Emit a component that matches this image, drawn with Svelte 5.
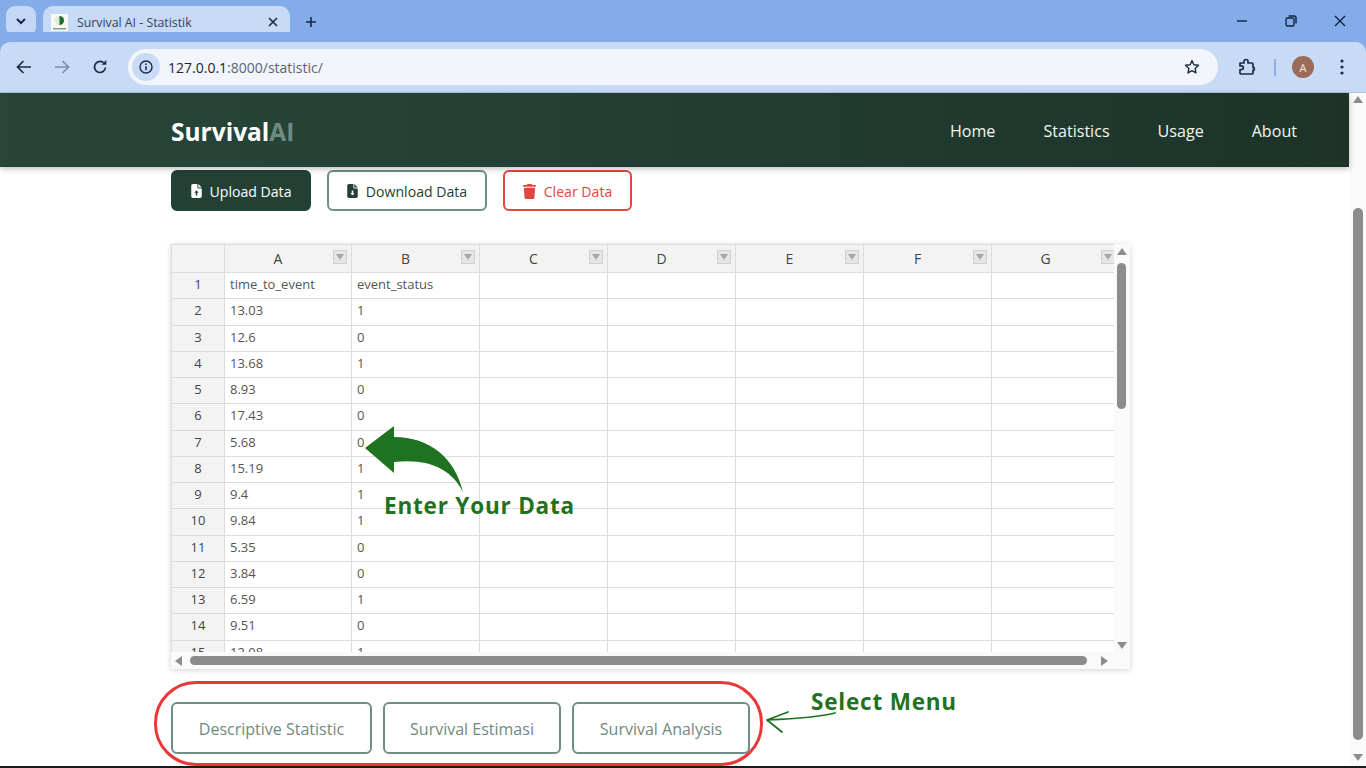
<script>
	const columns = ["A", "B", "C", "D", "E", "F", "G"];
	const data = [
		["time_to_event", "event_status"],
		["13.03", "1"],
		["12.6", "0"],
		["13.68", "1"],
		["8.93", "0"],
		["17.43", "0"],
		["5.68", "0"],
		["15.19", "1"],
		["9.4", "1"],
		["9.84", "1"],
		["5.35", "0"],
		["3.84", "0"],
		["6.59", "1"],
		["9.51", "0"],
		["12.08", "1"],
		["", ""]
	];
	const file = "M64 0C28.7 0 0 28.7 0 64V448c0 35.3 28.7 64 64 64H320c35.3 0 64-28.7 64-64V160H256c-17.7 0-32-14.3-32-32V0H64zM256 0V128H384L256 0z";
	const trash = "M135.2 17.7L128 32H32C14.3 32 0 46.3 0 64S14.3 96 32 96H416c17.7 0 32-14.3 32-32s-14.3-32-32-32H320l-7.2-14.3C307.4 6.8 296.3 0 284.2 0H163.8c-12.1 0-23.2 6.8-28.6 17.7zM416 128H32L53.2 467c1.6 25.3 22.6 45 47.9 45H346.9c25.3 0 46.3-19.7 47.9-45L416 128z";
</script>

<div class="window">
	<div class="tabstrip">
		<button class="tab-search" aria-label="Search tabs">
			<svg width="12" height="8" viewBox="0 0 12 8"><path d="M2 2l4 4 4-4" fill="none" stroke="#1c2b41" stroke-width="2"/></svg>
		</button>
		<div class="tab">
			<svg class="favicon" width="17" height="17" viewBox="0 0 17 17">
				<rect width="17" height="17" fill="#f6f8f2"/>
				<circle cx="8.5" cy="6.5" r="4.5" fill="#dfeadb"/>
				<path d="M8.5 2a4.5 4.5 0 0 1 0 9z" fill="#1f6b2c"/>
				<rect x="2" y="14" width="13" height="1.5" fill="#7da584"/>
			</svg>
			<span class="tab-title">Survival AI - Statistik</span>
			<svg class="tab-close" width="10" height="10" viewBox="0 0 10 10"><path d="M1 1l8 8M9 1l-8 8" stroke="#1c2b41" stroke-width="1.6"/></svg>
		</div>
		<svg class="new-tab" width="12" height="12" viewBox="0 0 12 12"><path d="M6 1v10M1 6h10" stroke="#1c2b41" stroke-width="1.6"/></svg>
		<div class="win-controls">
			<svg width="12" height="12" viewBox="0 0 12 12"><path d="M1 6h10" stroke="#10233f" stroke-width="1.4"/></svg>
			<svg width="12" height="12" viewBox="0 0 12 12"><rect x="1" y="3" width="8" height="8" rx="1.5" fill="none" stroke="#10233f" stroke-width="1.4"/><path d="M3.5 1h5.5a2 2 0 0 1 2 2v5.5" fill="none" stroke="#10233f" stroke-width="1.4"/></svg>
			<svg width="12" height="12" viewBox="0 0 12 12"><path d="M1 1l10 10M11 1L1 11" stroke="#10233f" stroke-width="1.4"/></svg>
		</div>
	</div>

	<div class="toolbar">
		<svg class="nav-icon" width="16" height="14" viewBox="0 0 16 14"><path d="M15 7H2M7.5 1L1.5 7l6 6" fill="none" stroke="#1c2b41" stroke-width="1.7"/></svg>
		<svg class="nav-icon" width="16" height="14" viewBox="0 0 16 14"><path d="M1 7h13M8.5 1l6 6-6 6" fill="none" stroke="#7d8da5" stroke-width="1.6"/></svg>
		<svg class="nav-icon" width="16" height="16" viewBox="0 0 16 16"><path d="M13.5 8.5A5.5 5.5 0 1 1 11.5 3.7" fill="none" stroke="#1c2b41" stroke-width="1.7"/><path d="M9.5 5.8h4.8V1z" fill="#1c2b41"/></svg>
		<div class="omnibox">
			<span class="site-info">
				<svg width="14" height="14" viewBox="0 0 14 14"><circle cx="7" cy="7" r="6" fill="none" stroke="#1c2b41" stroke-width="1.4"/><path d="M7 6.2v4M7 3.6v1.5" stroke="#1c2b41" stroke-width="1.5"/></svg>
			</span>
			<span class="url"><b>127.0.0.1</b>:8000/statistic/</span>
			<svg class="star" width="16" height="16" viewBox="0 0 16 16"><path d="M8 1.6l1.9 4.2 4.6.5-3.4 3.1.9 4.5L8 11.6l-4 2.3.9-4.5L1.500 6.300l4.600-.5z" fill="none" stroke="#1c2b41" stroke-width="1.4" stroke-linejoin="round"/></svg>
		</div>
		<svg class="puzzle" width="18" height="18" viewBox="0 0 18 18"><path d="M2 5h4V3.500a2 2 0 0 1 4 0V5h4a1 1 0 0 1 1 1v3.500h1.200v2.500H15V15a1 1 0 0 1-1 1H3a1 1 0 0 1-1-1v-3.500h1.500a1.800 1.800 0 0 0 0-3.600H2z" fill="none" stroke="#1c2b41" stroke-width="1.7" stroke-linejoin="round"/></svg>
		<span class="divider"></span>
		<span class="avatar">A</span>
		<svg class="menu" width="4" height="16" viewBox="0 0 4 16"><circle cx="2" cy="2" r="1.600" fill="#1c2b41"/><circle cx="2" cy="8" r="1.600" fill="#1c2b41"/><circle cx="2" cy="14" r="1.600" fill="#1c2b41"/></svg>
	</div>

	<div class="viewport">
		<main>
			<nav class="navbar">
				<a class="brand" href="#top">Survival<span>AI</span></a>
				<div class="links">
					<a href="#home">Home</a>
					<a href="#statistics">Statistics</a>
					<a href="#usage">Usage</a>
					<a href="#about">About</a>
				</div>
			</nav>

			<section class="content">
				<div class="actions">
					<button class="btn upload">
						<svg width="11" height="14" viewBox="0 0 384 512"><path d={file} fill="#fff"/><path d="M192 232l-80 88h52v96h56v-96h52z" fill="#234035"/></svg>
						Upload Data
					</button>
					<button class="btn download">
						<svg width="11" height="14" viewBox="0 0 384 512"><path d={file} fill="#234035"/><path d="M192 424l80-88h-52v-96h-56v96h-52z" fill="#fff"/></svg>
						Download Data
					</button>
					<button class="btn clear">
						<svg width="13" height="15" viewBox="0 0 448 512"><path d={trash} fill="#e0483e"/></svg>
						Clear Data
					</button>
				</div>

				<div class="sheet">
					<div class="sheet-view">
						<table>
							<thead>
								<tr>
									<th class="corner"></th>
									{#each columns as col}
										<th class="col">
											{col}
											<span class="filter"><i></i></span>
										</th>
									{/each}
								</tr>
							</thead>
							<tbody>
								{#each data as row, i}
									<tr>
										<th>{i + 1}</th>
										{#each columns as _, j}
											<td>{row[j] ?? ""}</td>
										{/each}
									</tr>
								{/each}
							</tbody>
						</table>
					</div>
					<div class="vbar">
						<i class="up"></i>
						<span class="vthumb"></span>
						<i class="down"></i>
					</div>
					<div class="hbar">
						<i class="left"></i>
						<span class="hthumb"></span>
						<i class="right"></i>
					</div>
					<div class="sheet-corner"></div>
				</div>

				<div class="menu-buttons">
					<button class="menu-btn wide">Descriptive Statistic</button>
					<button class="menu-btn">Survival Estimasi</button>
					<button class="menu-btn">Survival Analysis</button>
				</div>
			</section>
		</main>

		<aside class="page-scroll">
			<i class="up"></i>
			<span class="page-thumb"></span>
			<i class="down"></i>
		</aside>

		<!-- annotations drawn over the screenshot -->
		<div class="menu-ring"></div>
		<svg class="notes" width="1366" height="675" viewBox="0 93 1366 675">
			<path d="M365 448L394 426V437C430 437 455 458 463 492C452 470 430 458 394 462V473Z" fill="#1f7320"/>
			<path d="M835 713C815 718 790 719 767 720M788 712L767 720L782 732" fill="none" stroke="#1f7320" stroke-width="1.800" stroke-linecap="round" stroke-linejoin="round"/>
		</svg>
		<span class="note enter">Enter Your Data</span>
		<span class="note select">Select Menu</span>
	</div>
</div>

<style>
	:global(body) {
		margin: 0;
		overflow: hidden;
		background: #fff;
	}
	.window {
		width: 1366px;
		height: 768px;
		display: flex;
		flex-direction: column;
		overflow: hidden;
		font-family: "Open Sans", "Noto Sans", sans-serif;
		border-bottom: 2px solid #1a1a1a;
		box-sizing: border-box;
	}
	.tabstrip {
		height: 42px;
		flex: none;
		display: flex;
		align-items: flex-end;
		background: #84ace8;
		box-sizing: border-box;
	}
	.tab-search {
		width: 30px;
		height: 30px;
		margin: 0 7px 6px 6px;
		padding: 0;
		border: none;
		border-radius: 9px;
		background: #c4d8f5;
		display: flex;
		align-items: center;
		justify-content: center;
	}
	.tab {
		width: 247px;
		height: 36px;
		box-sizing: border-box;
		padding: 0 12px 4px 8px;
		display: flex;
		align-items: center;
		background: #c8dbf6;
		border-radius: 10px 10px 0 0;
	}
	.favicon {
		flex: none;
		margin-right: 9px;
	}
	.tab-title {
		flex: 1;
		font-size: 12.300px;
		color: #33415a;
		white-space: nowrap;
	}
	.new-tab {
		margin: 0 0 14px 15px;
	}
	.win-controls {
		margin: 0 0 15px auto;
		padding-right: 20px;
		display: flex;
		gap: 37px;
	}
	.toolbar {
		height: 51px;
		flex: none;
		box-sizing: border-box;
		display: flex;
		align-items: center;
		padding: 0 0 0 16px;
		background: #c8dbf6;
		border-bottom: 1px solid #b6c5da;
		border-radius: 10px 10px 0 0;
		margin-top: 0;
		box-shadow: 0 -10px 0 #84ace8;
	}
	.nav-icon {
		margin-right: 22px;
	}
	.nav-icon:nth-of-type(3) {
		margin-right: 20px;
	}
	.omnibox {
		width: 1090px;
		height: 36px;
		box-sizing: border-box;
		display: flex;
		align-items: center;
		padding: 0 18px 0 4px;
		border-radius: 18px;
		background: #f2f6fc;
	}
	.site-info {
		width: 28px;
		height: 28px;
		border-radius: 50%;
		background: #c8dbf6;
		display: flex;
		align-items: center;
		justify-content: center;
		margin-right: 8px;
	}
	.url {
		flex: 1;
		font-size: 14px;
		color: #5b6472;
	}
	.url b {
		font-weight: 400;
		color: #1c2430;
	}
	.puzzle {
		margin-left: 20px;
	}
	.divider {
		width: 2px;
		height: 17px;
		margin-left: 18px;
		background: #8fb0e4;
	}
	.avatar {
		width: 22px;
		height: 22px;
		margin-left: 16px;
		border-radius: 50%;
		background: #9a6b58;
		color: #f3e6df;
		font-size: 11px;
		display: flex;
		align-items: center;
		justify-content: center;
	}
	.menu {
		margin-left: 26px;
	}
	.viewport {
		position: relative;
		flex: 1;
		min-height: 0;
		display: flex;
	}
	main {
		width: 1349px;
		flex: none;
	}
	.navbar {
		height: 74px;
		box-sizing: border-box;
		padding: 2px 52px 0 171px;
		display: flex;
		align-items: center;
		justify-content: space-between;
		background: linear-gradient(90deg, #274638, #234035 40%, #1d3328);
		box-shadow: 0 2px 6px rgba(0, 0, 0, 0.25);
		position: relative;
	}
	.brand {
		font-size: 24.500px;
		font-weight: 700;
		color: #fff;
		text-decoration: none;
	}
	.brand span {
		color: #6f8a80;
	}
	.links {
		display: flex;
		gap: 48px;
	}
	.links a {
		font-size: 16.100px;
		color: #f2f5f3;
		text-decoration: none;
	}
	.content {
		padding: 3px 0 0 171px;
	}
	.actions {
		display: flex;
		gap: 16px;
	}
	.btn {
		height: 41px;
		box-sizing: border-box;
		padding: 1px 0 0;
		display: flex;
		align-items: center;
		justify-content: center;
		gap: 8px;
		border-radius: 6px;
		font-family: inherit;
		font-size: 14.100px;
		background: #fff;
	}
	.upload {
		width: 140px;
		background: #234035;
		border: 2px solid #234035;
		color: #fff;
	}
	.download {
		width: 160px;
		border: 2px solid #6f8f84;
		color: #234035;
	}
	.clear {
		width: 129px;
		border: 2px solid #e0483e;
		color: #e0483e;
	}
	.sheet {
		margin-top: 33px;
		width: 959px;
		height: 425px;
		box-sizing: border-box;
		display: grid;
		grid-template-columns: 943px 16px;
		grid-template-rows: 408px 17px;
		background: #fafafa;
		box-shadow: 0 1px 6px rgba(0, 0, 0, 0.18);
	}
	.sheet-view {
		overflow: hidden;
		background: #fff;
	}
	table {
		border-collapse: collapse;
		table-layout: fixed;
		width: 948px;
		font-size: 13px;
		color: #555;
	}
	thead tr {
		height: 28px;
	}
	tbody tr {
		height: 26.250px;
	}
	th,
	td {
		box-sizing: border-box;
		border: 1px solid #dcdcdc;
		padding: 0 0 3px;
		font-weight: 400;
		white-space: nowrap;
		overflow: hidden;
	}
	th {
		background: #f3f3f3;
		text-align: center;
		color: #444;
		width: 128px;
		position: relative;
	}
	th.col {
		padding: 0 20px 1px 0;
		font-size: 14px;
	}
	th.corner,
	tbody th {
		width: 53px;
	}
	th:nth-child(2) {
		width: 127px;
	}
	td {
		padding-left: 5px;
	}
	.filter {
		position: absolute;
		right: 4px;
		top: 5px;
		width: 14px;
		height: 14px;
		box-sizing: border-box;
		border: 1px solid #d0d0d0;
		background: #e6e6e6;
		display: flex;
		align-items: center;
		justify-content: center;
	}
	.filter i {
		width: 0;
		height: 0;
		border-left: 4px solid transparent;
		border-right: 4px solid transparent;
		border-top: 6px solid #a8a8a8;
	}
	.vbar,
	.page-scroll {
		display: flex;
		flex-direction: column;
		align-items: center;
		background: #fafafa;
	}
	.vbar i,
	.page-scroll i,
	.hbar i {
		width: 0;
		height: 0;
		flex: none;
	}
	i.up {
		border-left: 5px solid transparent;
		border-right: 5px solid transparent;
		border-bottom: 7px solid #8c8c8c;
	}
	i.down {
		border-left: 5px solid transparent;
		border-right: 5px solid transparent;
		border-top: 7px solid #8c8c8c;
	}
	.vbar {
		padding-right: 1px;
	}
	.vbar .up {
		margin-top: 4px;
	}
	.vthumb {
		width: 9px;
		height: 146px;
		margin-top: 8px;
		border-radius: 5px;
		background: #8c8c8c;
	}
	.vbar .down {
		margin-top: auto;
		margin-bottom: 3px;
	}
	.hbar {
		display: flex;
		align-items: center;
		background: #fafafa;
	}
	.left {
		margin-left: 4px;
		border-top: 5px solid transparent;
		border-bottom: 5px solid transparent;
		border-right: 7px solid #8c8c8c;
	}
	.hthumb {
		width: 897px;
		height: 9px;
		margin-left: 8px;
		border-radius: 5px;
		background: #8c8c8c;
	}
	.right {
		margin-left: 14px;
		border-top: 5px solid transparent;
		border-bottom: 5px solid transparent;
		border-left: 7px solid #8c8c8c;
	}
	.sheet-corner {
		background: #fafafa;
	}
	.menu-buttons {
		margin-top: 33px;
		display: flex;
		gap: 11px;
	}
	.menu-btn {
		width: 178px;
		height: 52px;
		box-sizing: border-box;
		padding: 2px 0 0;
		border: 2px solid #6f8f84;
		border-radius: 6px;
		background: #fff;
		font-family: inherit;
		font-size: 16px;
		color: #6f8a80;
	}
	.menu-btn.wide {
		width: 201px;
	}
	.page-scroll {
		flex: 1;
	}
	.page-scroll .up {
		margin-top: 3px;
	}
	.page-thumb {
		width: 10px;
		height: 532px;
		margin-top: 105px;
		border-radius: 5px;
		background: #8c8c8c;
	}
	.page-scroll .down {
		margin-top: auto;
		margin-bottom: 5px;
	}
	.menu-ring {
		position: absolute;
		left: 154px;
		top: 588px;
		width: 609px;
		height: 85px;
		box-sizing: border-box;
		border: 3px solid #e8383a;
		border-radius: 42px;
		pointer-events: none;
	}
	.notes {
		position: absolute;
		left: 0;
		top: 0;
		pointer-events: none;
	}
	.note {
		position: absolute;
		font-family: "Open Sans", sans-serif;
		font-weight: 700;
		font-size: 22.500px;
		letter-spacing: 0.8px;
		line-height: 28px;
		color: #1f7320;
		white-space: nowrap;
	}
	.enter {
		left: 384px;
		top: 399px;
	}
	.select {
		left: 811px;
		top: 595px;
	}
</style>
